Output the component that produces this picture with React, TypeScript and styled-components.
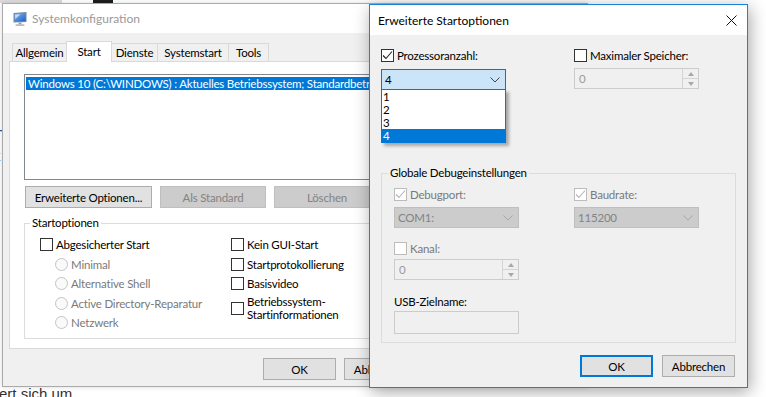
import React from 'react';
import styled, { createGlobalStyle } from 'styled-components';

const UI_FONT = `Lato, "Noto Sans", "DejaVu Sans", sans-serif`;

const GlobalStyle = createGlobalStyle`
  html, body {
    margin: 0;
    padding: 0;
    background: #ffffff;
  }
  * {
    box-sizing: border-box;
  }
`;

// The desktop everything sits on
const Desktop = styled.div`
  position: relative;
  width: 766px;
  height: 397px;
  overflow: hidden;
  background: #ffffff;
  font-family: ${UI_FONT};
  font-size: 11.5px;
  letter-spacing: -0.2px;
  color: #000;
`;

// Bits of the page behind the windows
const BackStrip = styled.div<{ $x: number; $w: number; $color: string }>`
  position: absolute;
  top: 0;
  left: ${({ $x }) => $x}px;
  width: ${({ $w }) => $w}px;
  height: 3px;
  background: ${({ $color }) => $color};
`;

const BackText = styled.span<{ $x: number; $y: number; $color?: string; $size?: number }>`
  position: absolute;
  left: ${({ $x }) => $x}px;
  top: ${({ $y }) => $y}px;
  color: ${({ $color }) => $color || '#333'};
  font-family: "Liberation Sans", Arial, sans-serif;
  font-size: ${({ $size }) => $size || 15}px;
  letter-spacing: 0;
  line-height: 1;
  white-space: nowrap;
`;

/* ---------- shared controls ---------- */

const CheckBoxBox = styled.span<{ $disabled?: boolean }>`
  display: inline-flex;
  flex: 0 0 13px;
  width: 13px;
  height: 13px;
  border: 1px solid ${({ $disabled }) => ($disabled ? '#bcbcbc' : '#333333')};
  background: #ffffff;
  align-items: center;
  justify-content: center;
`;

const RadioCircle = styled.span`
  display: inline-block;
  flex: 0 0 13px;
  width: 13px;
  height: 13px;
  border: 1px solid #c4c4c4;
  border-radius: 50%;
  background: #fafafa;
`;

const OptionRow = styled.div<{ $h?: number; $indent?: number; $disabled?: boolean }>`
  display: flex;
  align-items: center;
  gap: 3px;
  height: ${({ $h }) => $h || 14}px;
  margin-left: ${({ $indent }) => $indent || 0}px;
  color: ${({ $disabled }) => ($disabled ? '#7a7a7a' : '#000')};
  line-height: 13px;
  white-space: nowrap;
`;

const Button = styled.button<{ $w: number; $default?: boolean }>`
  width: ${({ $w }) => $w}px;
  height: 22px;
  padding: 0;
  font-family: ${UI_FONT};
  font-size: 11.5px;
  letter-spacing: -0.2px;
  color: #000;
  background: #e1e1e1;
  border: ${({ $default }) => ($default ? '2px solid #0078d7' : '1px solid #adadad')};
  cursor: default;

  &:disabled {
    background: #cccccc;
    border-color: #bfbfbf;
    color: #838383;
  }
`;

const Fieldset = styled.fieldset<{ $pad: string }>`
  margin: 0;
  min-width: 0;
  padding: ${({ $pad }) => $pad};
  border: 1px solid #dcdcdc;
`;

const Legend = styled.legend<{ $shift: number }>`
  margin-left: ${({ $shift }) => $shift}px;
  padding: 0 2px;
  font-size: 11.5px;
  line-height: 14px;
`;

const CheckMark: React.FC<{ color: string }> = ({ color }) => (
  <svg width="11" height="11" viewBox="0 0 11 11">
    <path d="M1 5.5 L4 8.5 L10 1.5" fill="none" stroke={color} strokeWidth="1.1" />
  </svg>
);

const Check: React.FC<{ checked?: boolean; disabled?: boolean }> = ({ checked, disabled }) => (
  <CheckBoxBox $disabled={disabled}>
    {checked && <CheckMark color={disabled ? '#b4b4b4' : '#222'} />}
  </CheckBoxBox>
);

const Chevron: React.FC<{ color: string }> = ({ color }) => (
  <svg width="10" height="6" viewBox="0 0 10 6">
    <path d="M0.5 0.5 L5 5 L9.5 0.5" fill="none" stroke={color} strokeWidth="1" />
  </svg>
);

/* ---------- main window: Systemkonfiguration ---------- */

const MainWindow = styled.div`
  position: absolute;
  left: 2px;
  top: 3px;
  width: 586px;
  height: 384px;
  display: flex;
  flex-direction: column;
  background: #f0f0f0;
  border: 1px solid #aaaaaa;
  box-shadow: 0 0 5px rgba(0, 0, 0, 0.15);
`;

const TitleBar = styled.div<{ $active?: boolean }>`
  display: flex;
  align-items: center;
  gap: 4px;
  flex: 0 0 ${({ $active }) => ($active ? 30 : 29)}px;
  padding: 0 10px 0 ${({ $active }) => ($active ? 8 : 9)}px;
  background: #ffffff;
  color: ${({ $active }) => ($active ? '#000' : '#999999')};
  font-size: 12px;
  letter-spacing: 0;
`;

const TitleText = styled.span`
  flex: 1;
  white-space: nowrap;
`;

const TabStrip = styled.div`
  display: flex;
  align-items: flex-end;
  height: 20px;
  margin-top: 8px;
  padding-left: 9px;
`;

const Tab = styled.div<{ $w: number; $selected?: boolean }>`
  position: relative;
  display: flex;
  align-items: center;
  justify-content: center;
  width: ${({ $w }) => $w}px;
  height: ${({ $selected }) => ($selected ? 21 : 18)}px;
  margin-left: -1px;
  margin-bottom: ${({ $selected }) => ($selected ? -1 : 0)}px;
  padding-bottom: ${({ $selected }) => ($selected ? 2 : 0)}px;
  background: ${({ $selected }) => ($selected ? '#ffffff' : '#f0f0f0')};
  border: 1px solid #d9d9d9;
  border-bottom: none;
  z-index: ${({ $selected }) => ($selected ? 1 : 0)};

  &:first-child {
    margin-left: 0;
  }
`;

const TabPanel = styled.div`
  display: flex;
  flex-direction: column;
  height: 288px;
  margin: 0 6px;
  padding: 12px 14px 0;
  background: #ffffff;
  border: 1px solid #d9d9d9;
`;

const ListBox = styled.div`
  height: 106px;
  padding: 2px 1px;
  background: #ffffff;
  border: 1px solid #828790;
  overflow: hidden;
`;

const ListRow = styled.div<{ $selected?: boolean }>`
  height: 13px;
  padding-left: 2px;
  line-height: 13px;
  white-space: nowrap;
  background: ${({ $selected }) => ($selected ? '#0078d7' : 'transparent')};
  color: ${({ $selected }) => ($selected ? '#ffffff' : '#000')};
`;

const ButtonRow = styled.div`
  display: flex;
  gap: 8px;
  margin: 6px 0 0 1px;
`;

const StartGrid = styled.div`
  display: grid;
  grid-template-columns: 191px 1fr;
  padding-top: 5px;
`;

const Column = styled.div`
  display: flex;
  flex-direction: column;
`;

const Footer = styled.div<{ $gap: number; $top: number; $right: number }>`
  display: flex;
  justify-content: flex-end;
  gap: ${({ $gap }) => $gap}px;
  margin-top: ${({ $top }) => $top}px;
  padding-right: ${({ $right }) => $right}px;
`;

const MsconfigIcon = () => (
  <svg width="16" height="16" viewBox="0 0 16 16">
    <defs>
      <linearGradient id="scr" x1="0" y1="0" x2="1" y2="1">
        <stop offset="0" stopColor="#7fb8f0" />
        <stop offset="1" stopColor="#1d5fc4" />
      </linearGradient>
    </defs>
    <path d="M1.5 2 L14.5 1 L14.5 11 L1.5 11.5 Z" fill="#7b8696" />
    <path d="M2.5 3 L13.5 2.2 L13.5 10 L2.5 10.5 Z" fill="url(#scr)" />
    <path d="M3.2 3.6 L8.5 3.2 L3.2 8 Z" fill="#e6f2ff" opacity="0.75" />
    <rect x="6.5" y="11.5" width="3" height="2" fill="#9aa3ae" />
    <rect x="3.5" y="13.3" width="9" height="1.8" rx="0.6" fill="#b4bcc6" />
  </svg>
);

/* ---------- dialog: Erweiterte Startoptionen ---------- */

const Dialog = styled.div`
  position: absolute;
  left: 369px;
  top: 4px;
  width: 379px;
  height: 384px;
  display: flex;
  flex-direction: column;
  background: #f0f0f0;
  border: 1px solid #1883d7;
  box-shadow: 2px 4px 16px rgba(0, 0, 0, 0.35);
  z-index: 2;
`;

const DialogBody = styled.div`
  display: flex;
  flex-direction: column;
  padding: 13px 11px 0;
`;

const TwoCols = styled.div<{ $first: number }>`
  display: grid;
  grid-template-columns: ${({ $first }) => $first}px 125px;
`;

const Field = styled.div`
  position: relative;
  display: flex;
  flex-direction: column;
  align-items: flex-start;
`;

const Combo = styled.div<{ $focused?: boolean; $top: number }>`
  display: flex;
  align-items: center;
  justify-content: space-between;
  width: 125px;
  height: 21px;
  margin-top: ${({ $top }) => $top}px;
  padding: 0 5px 0 3px;
  background: ${({ $focused }) => ($focused ? '#cce4f7' : '#cccccc')};
  border: 1px solid ${({ $focused }) => ($focused ? '#0078d7' : '#bfbfbf')};
  color: ${({ $focused }) => ($focused ? '#000' : '#838383')};
`;

const DropList = styled.div`
  position: absolute;
  top: 41px;
  left: 0;
  width: 125px;
  background: #ffffff;
  border: 1px solid #0078d7;
  box-shadow: 3px 3px 3px rgba(0, 0, 0, 0.3);
  z-index: 3;
`;

const DropItem = styled.div<{ $selected?: boolean }>`
  height: 13px;
  padding-left: 1px;
  line-height: 13px;
  background: ${({ $selected }) => ($selected ? '#0078d7' : '#ffffff')};
  color: ${({ $selected }) => ($selected ? '#ffffff' : '#000')};
`;

const Spin = styled.div<{ $top: number }>`
  display: flex;
  width: 125px;
  height: 21px;
  margin-top: ${({ $top }) => $top}px;
  background: #f0f0f0;
  border: 1px solid #cccccc;
  color: #9a9a9a;
`;

const SpinValue = styled.span`
  flex: 1;
  padding-left: 4px;
  line-height: 19px;
`;

const SpinButtons = styled.div`
  display: flex;
  flex-direction: column;
  width: 16px;
  border-left: 1px solid #d4d4d4;
`;

const SpinHalf = styled.div<{ $down?: boolean }>`
  flex: 1;
  display: flex;
  align-items: center;
  justify-content: center;
  border-top: ${({ $down }) => ($down ? '1px solid #d4d4d4' : 'none')};

  &::after {
    content: '';
    border-left: 3.5px solid transparent;
    border-right: 3.5px solid transparent;
    ${({ $down }) => ($down ? 'border-top: 4px solid #a8a8a8;' : 'border-bottom: 4px solid #a8a8a8;')}
  }
`;

const TextBox = styled.div<{ $top: number }>`
  width: 125px;
  height: 23px;
  margin-top: ${({ $top }) => $top}px;
  background: #f0f0f0;
  border: 1px solid #cccccc;
`;

const Spacer = styled.div<{ $h: number }>`
  height: ${({ $h }) => $h}px;
`;

const CloseIcon = () => (
  <svg width="11" height="11" viewBox="0 0 11 11">
    <path d="M0.5 0.5 L10.5 10.5 M10.5 0.5 L0.5 10.5" stroke="#111" strokeWidth="1" />
  </svg>
);

const SpinBox: React.FC<{ top: number }> = ({ top }) => (
  <Spin $top={top}>
    <SpinValue>0</SpinValue>
    <SpinButtons>
      <SpinHalf />
      <SpinHalf $down />
    </SpinButtons>
  </Spin>
);

export default function App() {
  return (
    <>
      <GlobalStyle />
      <Desktop>
        <BackStrip $x={0} $w={62} $color="#dcdcdc" />
        <BackStrip $x={93} $w={20} $color="#1e1e1e" />
        <BackText $x={-6} $y={127} $color="#2b4fb5">T</BackText>
        <BackText $x={-7} $y={148} $color="#2b4fb5">k</BackText>
        <BackText $x={-6} $y={166} $color="#2b4fb5">r</BackText>
        <BackText $x={-1} $y={386}>ert sich um ...</BackText>

        <MainWindow>
          <TitleBar>
            <MsconfigIcon />
            <TitleText>Systemkonfiguration</TitleText>
          </TitleBar>

          <TabStrip>
            <Tab $w={55}>Allgemein</Tab>
            <Tab $w={46} $selected>Start</Tab>
            <Tab $w={47}>Dienste</Tab>
            <Tab $w={72}>Systemstart</Tab>
            <Tab $w={41}>Tools</Tab>
          </TabStrip>

          <TabPanel>
            <ListBox>
              <ListRow $selected>
                Windows 10 (C:\WINDOWS) : Aktuelles Betriebssystem; Standardbetriebssystem
              </ListRow>
            </ListBox>

            <ButtonRow>
              <Button $w={127}>Erweiterte Optionen...</Button>
              <Button $w={106} disabled>Als Standard</Button>
              <Button $w={106} disabled>Löschen</Button>
              <Button $w={106} disabled>Timeout:</Button>
            </ButtonRow>

            <Spacer $h={8} />
            <Fieldset $pad="0 15px 5px">
              <Legend $shift={-10}>Startoptionen</Legend>
              <StartGrid>
                <Column>
                  <OptionRow $h={19.5}>
                    <Check />
                    Abgesicherter Start
                  </OptionRow>
                  <OptionRow $h={19.5} $indent={15} $disabled>
                    <RadioCircle />
                    Minimal
                  </OptionRow>
                  <OptionRow $h={19.5} $indent={15} $disabled>
                    <RadioCircle />
                    Alternative Shell
                  </OptionRow>
                  <OptionRow $h={19.5} $indent={15} $disabled>
                    <RadioCircle />
                    Active Directory-Reparatur
                  </OptionRow>
                  <OptionRow $h={19.5} $indent={15} $disabled>
                    <RadioCircle />
                    Netzwerk
                  </OptionRow>
                </Column>
                <Column>
                  <OptionRow $h={19.5}>
                    <Check />
                    Kein GUI-Start
                  </OptionRow>
                  <OptionRow $h={19.5}>
                    <Check />
                    Startprotokollierung
                  </OptionRow>
                  <OptionRow $h={19.5}>
                    <Check />
                    Basisvideo
                  </OptionRow>
                  <OptionRow $h={29}>
                    <Check />
                    <span>
                      Betriebssystem-
                      <br />
                      Startinformationen
                    </span>
                  </OptionRow>
                </Column>
              </StartGrid>
            </Fieldset>
          </TabPanel>

          <Footer $gap={8} $top={9} $right={8}>
            <Button $w={73}>OK</Button>
            <Button $w={73}>Abbrechen</Button>
            <Button $w={73}>Übernehmen</Button>
            <Button $w={73}>Hilfe</Button>
          </Footer>
        </MainWindow>

        <Dialog>
          <TitleBar $active>
            <TitleText>Erweiterte Startoptionen</TitleText>
            <CloseIcon />
          </TitleBar>

          <DialogBody>
            <TwoCols $first={193}>
              <Field>
                <OptionRow>
                  <Check checked />
                  Prozessoranzahl:
                </OptionRow>
                <Combo $focused $top={7}>
                  <span>4</span>
                  <Chevron color="#444" />
                </Combo>
                <DropList>
                  {['1', '2', '3', '4'].map((n) => (
                    <DropItem key={n} $selected={n === '4'}>
                      {n}
                    </DropItem>
                  ))}
                </DropList>
              </Field>
              <Field>
                <OptionRow>
                  <Check />
                  Maximaler Speicher:
                </OptionRow>
                <SpinBox top={6} />
              </Field>
            </TwoCols>

            <Spacer $h={76} />
            <Fieldset $pad="0 12px 8px">
              <Legend $shift={-6}>Globale Debugeinstellungen</Legend>
              <Spacer $h={7} />
              <TwoCols $first={180}>
                <Field>
                  <OptionRow $disabled>
                    <Check checked disabled />
                    Debugport:
                  </OptionRow>
                  <Combo $top={6}>
                    <span>COM1:</span>
                    <Chevron color="#a8a8a8" />
                  </Combo>
                  <Spacer $h={13} />
                  <OptionRow $disabled>
                    <Check disabled />
                    Kanal:
                  </OptionRow>
                  <SpinBox top={4} />
                  <Spacer $h={14} />
                  <OptionRow>USB-Zielname:</OptionRow>
                  <TextBox $top={3} />
                </Field>
                <Field>
                  <OptionRow $disabled>
                    <Check checked disabled />
                    Baudrate:
                  </OptionRow>
                  <Combo $top={6}>
                    <span>115200</span>
                    <Chevron color="#a8a8a8" />
                  </Combo>
                </Field>
              </TwoCols>
            </Fieldset>

            <Footer $gap={9} $top={12} $right={1}>
              <Button $w={73} $default>OK</Button>
              <Button $w={73}>Abbrechen</Button>
            </Footer>
          </DialogBody>
        </Dialog>
      </Desktop>
    </>
  );
}
